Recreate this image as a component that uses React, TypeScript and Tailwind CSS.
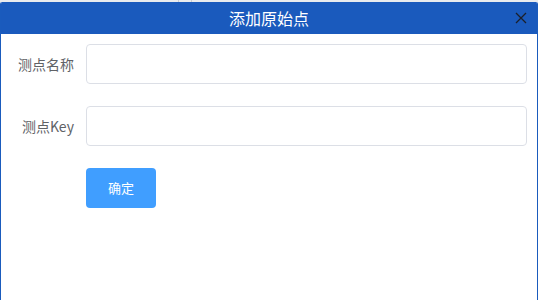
import { useState } from "react";

const FONT = { fontFamily: '"Noto Sans CJK SC", "Noto Sans", sans-serif' };

function Field({ label }: { label: string }) {
  const [value, setValue] = useState("");
  return (
    <div className="flex items-center">
      <label className="w-[85px] shrink-0 pr-[12px] text-right text-[14px] text-[#606266]">
        {label}
      </label>
      <input
        value={value}
        onChange={(e) => setValue(e.target.value)}
        className="h-[40px] flex-1 rounded-[4px] border border-[#dcdfe6] bg-white px-[15px] text-[13px] text-[#606266] outline-none focus:border-[#409eff]"
      />
    </div>
  );
}

export default function App() {
  return (
    <div className="h-[300px] w-[538px] overflow-hidden bg-[#eef0f3]" style={FONT}>
      {/* page behind the dialog peeks through at the top */}
      <div className="flex h-[2px] bg-[#e9ebee]">
        <div className="w-[178px]" />
        <div className="w-px bg-[#c9ccd1]" />
        <div className="w-[12px]" />
        <div className="w-px bg-[#c9ccd1]" />
      </div>
      <div className="flex h-[298px] flex-col overflow-hidden rounded-t-[2px] border-x border-[#1a5bbd] bg-white">
        <div className="relative flex h-[32px] shrink-0 items-center justify-center bg-[#1a5abd]">
          <span className="text-[16px] text-white">添加原始点</span>
          <button className="absolute right-[10px] top-[10px] text-[#1b1f2a]">
            <svg width="12" height="12" viewBox="0 0 12 12" fill="none" stroke="currentColor" strokeWidth="1.3">
              <path d="M1 1 L11 11 M11 1 L1 11" />
            </svg>
          </button>
        </div>
        <div className="flex flex-col gap-[22px] pt-[10px] pr-[10px]">
          <Field label="测点名称" />
          <Field label="测点Key" />
          <div className="pl-[85px]">
            <button className="h-[40px] w-[70px] rounded-[4px] bg-[#409eff] text-[13px] text-white">
              确定
            </button>
          </div>
        </div>
      </div>
    </div>
  );
}
